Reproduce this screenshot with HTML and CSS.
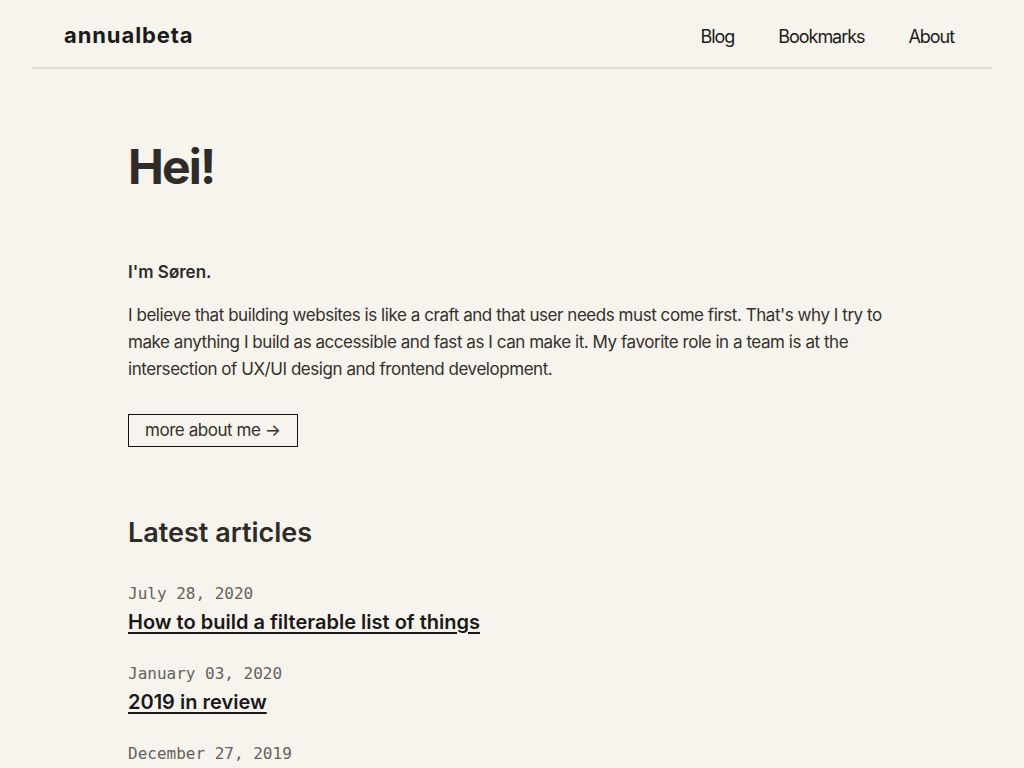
FILE: index.html
```html
<!DOCTYPE html>
<html lang="en">
<head>
<meta charset="utf-8">
<title>annualbeta</title>
<link rel="stylesheet" href="styles.css">
</head>
<body>
<header class="site-header">
  <a class="logo" href="#">annualbeta</a>
  <nav class="nav">
    <a href="#">Blog</a>
    <a href="#">Bookmarks</a>
    <a href="#">About</a>
  </nav>
</header>
<main class="content">
  <h1 class="hero">Hei!</h1>
  <p class="intro-name">I'm Søren.</p>
  <p class="intro-text">I believe that building websites is like a craft and that user needs must come first. That's why I try to make anything I build as accessible and fast as I can make it. My favorite role in a team is at the intersection of UX/UI design and frontend development.</p>
  <a class="button" href="#">more about me →</a>
  <h2 class="section-title">Latest articles</h2>
  <ul class="articles">
    <li class="article">
      <time class="date">July 28, 2020</time>
      <a class="article-title" href="#">How to build a filterable list of things</a>
    </li>
    <li class="article">
      <time class="date">January 03, 2020</time>
      <a class="article-title" href="#">2019 in review</a>
    </li>
    <li class="article">
      <time class="date">December 27, 2019</time>
      <a class="article-title" href="#">A year of bookmarks</a>
    </li>
  </ul>
</main>
</body>
</html>
```

FILE: styles.css
```css
* { box-sizing: border-box; }
html, body { margin: 0; padding: 0; }
body {
  background: #f7f4ee;
  color: #2e2b28;
  font-family: Inter, "Noto Sans", sans-serif;
}
a { color: inherit; }
.site-header {
  margin: 0 32px;
  height: 69px;
  border-bottom: 2px solid #dedbd5;
  display: flex;
  align-items: center;
  justify-content: space-between;
  padding: 0 16px 0 32px;
}
.logo {
  font-size: 22px;
  font-weight: 700;
  color: #1c1b1a;
  text-decoration: none;
  letter-spacing: 0.9px;
  margin-top: 2px;
}
.nav { display: flex; }
.nav a {
  font-size: 18px;
  color: #1c1b1a;
  text-decoration: none;
  padding: 0 22px;
  margin-top: 6px;
  letter-spacing: -1.05px;
}
.nav a:last-child { padding-right: 22px; }
.content {
  width: 768px;
  margin: 0 auto;
  padding-top: 72px;
}
.hero {
  font-size: 48px;
  font-weight: 700;
  margin: 0 0 65px;
  letter-spacing: -1.8px;
  line-height: 1.1;
}
.intro-name {
  font-size: 17px;
  font-weight: 600;
  margin: 0 0 16px;
  line-height: 27px;
}
.intro-text {
  font-size: 17px;
  line-height: 27px;
  margin: 0 0 32px;
  letter-spacing: -0.45px;
  color: #34302c;
}
.button {
  display: inline-block;
  border: 1px solid #111;
  padding: 3px 16px 3px;
  margin-top: -1px;
  font-size: 17px;
  line-height: 25px;
  text-decoration: none;
  letter-spacing: -0.45px;
  color: #34302c;
}
.section-title {
  font-size: 27px;
  font-weight: 600;
  margin: 70px 0 33px;
  line-height: 32px;
}
.articles { list-style: none; margin: 0; padding: 0; }
.article { display: flex; flex-direction: column; margin-bottom: 22px; }
.date {
  font-family: "DejaVu Sans Mono", monospace;
  font-size: 16px;
  color: #65615c;
  line-height: 24px;
}
.article-title {
  font-size: 20px;
  font-weight: 600;
  color: #1a1918;
  text-decoration-thickness: 2px;
  text-underline-offset: 3px;
  line-height: 32px;
  margin-bottom: 2px;
}
```
